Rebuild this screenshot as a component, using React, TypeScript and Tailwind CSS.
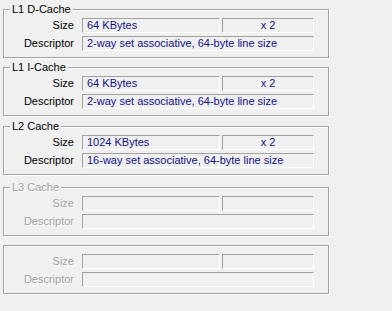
import React from "react";

type CacheInfo = {
  title?: string;
  size?: string;
  count?: string;
  descriptor?: string;
  disabled?: boolean;
  marginTop: string;
};

const caches: CacheInfo[] = [
  {
    title: "L1 D-Cache",
    size: "64 KBytes",
    count: "x 2",
    descriptor: "2-way set associative, 64-byte line size",
    marginTop: "mt-[9px]",
  },
  {
    title: "L1 I-Cache",
    size: "64 KBytes",
    count: "x 2",
    descriptor: "2-way set associative, 64-byte line size",
    marginTop: "mt-[9px]",
  },
  {
    title: "L2 Cache",
    size: "1024 KBytes",
    count: "x 2",
    descriptor: "16-way set associative, 64-byte line size",
    marginTop: "mt-[10px]",
  },
  { title: "L3 Cache", disabled: true, marginTop: "mt-[12px]" },
  { disabled: true, marginTop: "mt-[9px]" },
];

const Field = ({
  value,
  width,
  center,
}: {
  value?: string;
  width: string;
  center?: boolean;
}) => (
  <div
    className={`${width} h-[15px] border border-t-[#a0a0a0] border-l-[#a0a0a0] border-b-white border-r-white px-[4px] text-[11px] leading-[13px] text-[#10108c] whitespace-nowrap overflow-hidden ${
      center ? "text-center" : ""
    }`}
  >
    {value}
  </div>
);

const CacheGroup = ({ cache }: { cache: CacheInfo }) => {
  const labelColor = cache.disabled
    ? "text-[#a0a0a0] [text-shadow:1px_1px_0_#fff]"
    : "text-black";
  return (
    <div
      className={`relative w-[326px] h-[49px] border border-[#a0a0a0] shadow-[inset_1px_1px_0_#fff,1px_1px_0_#fff] pt-[8px] ${cache.marginTop}`}
    >
      {cache.title && (
        <span
          className={`absolute left-[6px] top-[-7px] bg-[#f0f0f0] px-[2px] text-[11px] leading-[13px] ${labelColor}`}
        >
          {cache.title}
        </span>
      )}
      <div className="flex flex-col gap-[3px]">
        <div className="flex items-center">
          <span className={`w-[70px] text-right text-[11px] leading-[13px] ${labelColor}`}>
            Size
          </span>
          <div className="ml-[8px] flex gap-[2px]">
            <Field value={cache.size} width="w-[138px]" />
            <Field value={cache.count} width="w-[92px]" center />
          </div>
        </div>
        <div className="flex items-center">
          <span className={`w-[70px] text-right text-[11px] leading-[13px] ${labelColor}`}>
            Descriptor
          </span>
          <div className="ml-[8px]">
            <Field value={cache.descriptor} width="w-[232px]" />
          </div>
        </div>
      </div>
    </div>
  );
};

export default function App() {
  return (
    <div
      className="w-[392px] h-[311px] bg-[#f0f0f0] pl-[3px] flex flex-col overflow-hidden"
      style={{ fontFamily: '"Liberation Sans", Arial, sans-serif' }}
    >
      {caches.map((c, i) => (
        <CacheGroup key={i} cache={c} />
      ))}
    </div>
  );
}
